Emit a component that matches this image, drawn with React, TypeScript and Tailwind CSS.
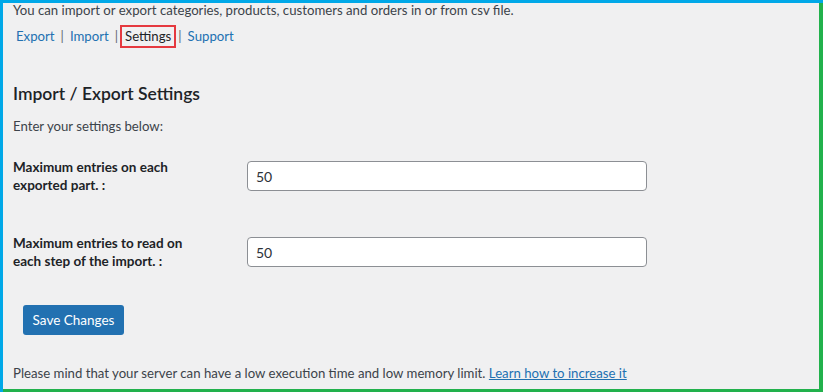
import { FC } from 'react';

const links = ['Export', 'Import', 'Settings', 'Support'];

const fields = [
    { label: ['Maximum entries on each', 'exported part. :'], value: '50' },
    { label: ['Maximum entries to read on', 'each step of the import. :'], value: '50' },
];

const App: FC = () => {
    return (
        <div className="w-[823px] h-[392px] overflow-hidden bg-[#f0f0f1] border-t-[3px] border-l-[3px] border-[#00a8e8] font-['Lato',sans-serif] text-[13.2px] text-[#3c434a]">
            <div className="h-full border-r-4 border-b-[3px] border-[#22b14c] pl-[10px] flex flex-col">
                {/* Intro */}
                <p className="-mt-[1px] leading-[17px]">
                    You can import or export categories, products, customers and orders in or from csv file.
                </p>
                <nav className="flex items-center mt-[6px] pl-[3px] h-[23px] text-[#2271b1] text-[13.2px]">
                    {links.map((link, index) => (
                        <span key={link} className="flex items-center">
                            {index > 0 && (
                                <span className={`text-[#646970] ${link === 'Settings' ? 'ml-[6px] mr-[2px]' : link === 'Support' ? 'ml-[2px] mr-[6px]' : 'mx-[6px]'}`}>|</span>
                            )}
                            {link === 'Settings' ? (
                                <span className="border-2 border-[#e5393f] px-[3px] h-[23px] flex items-center text-[#1d2327]">
                                    {link}
                                </span>
                            ) : (
                                <span>{link}</span>
                            )}
                        </span>
                    ))}
                </nav>

                {/* Settings */}
                <h2 className="mt-[35px] text-[17.5px] font-semibold text-[#1d2327] leading-[22px]">Import / Export Settings</h2>
                <p className="mt-[13px] leading-[17px]">Enter your settings below:</p>

                <div className="flex flex-col gap-[46px] mt-[26px]">
                    {fields.map((field, index) => (
                        <div key={index} className="flex items-start h-[30px]">
                            <div className="w-[234px] font-bold text-[13.5px] text-[#1d2327] leading-[18px] -mt-[3px]">
                                {field.label[0]}
                                <br />
                                {field.label[1]}
                            </div>
                            <div className="w-[400px] h-[30px] bg-white border border-[#8c8f94] rounded-[4px] flex items-center px-[8px] text-[#2c3338] text-[14px]">
                                {field.value}
                            </div>
                        </div>
                    ))}
                </div>

                <div className="mt-[38px] pl-[10px]">
                    <button className="h-[30px] w-[101px] bg-[#2271b1] text-white rounded-[3px] text-[13.5px]">
                        Save Changes
                    </button>
                </div>

                <p className="mt-[30px] leading-[17px]">
                    Please mind that your server can have a low execution time and low memory limit.{' '}
                    <span className="text-[#2271b1] underline">Learn how to increase it</span>
                </p>
            </div>
        </div>
    );
};

export default App;
